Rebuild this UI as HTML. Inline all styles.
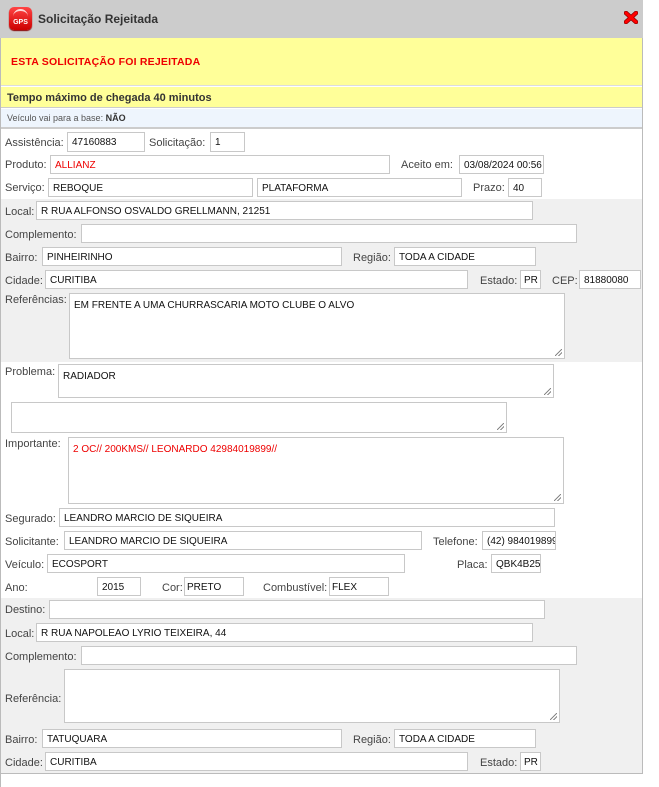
<!DOCTYPE html>
<html><head><meta charset="utf-8"><style>
*{box-sizing:border-box;margin:0;padding:0}
body{width:659px;height:787px;background:#fff;position:relative;overflow:hidden;font-family:"Liberation Sans",Arial,sans-serif}
.a{position:absolute}
.l{position:absolute;font-size:11px;color:#444;line-height:12px;white-space:nowrap}
.i{position:absolute;height:20px;background:#fff;border:1px solid #c8c8c8;font-size:10px;color:#111;padding:3px 0 0 4px;line-height:13px;white-space:nowrap;overflow:hidden}
.t{position:absolute;background:#fff;border:1px solid #c8c8c8;font-size:10px;color:#111;padding:6px 4px;line-height:12px}
.t::after{content:"";position:absolute;right:2px;bottom:2px;width:7px;height:7px;background:linear-gradient(135deg,transparent 45%,#888 46%,#888 54%,transparent 55%,transparent 70%,#888 71%,#888 79%,transparent 80%)}
</style></head><body>
<div class="a" style="left:0;top:0;width:643px;height:774px;border-left:1px solid #bbb;border-right:1px solid #bbb;border-bottom:1px solid #bbb"></div>
<div class="a" style="left:0;top:774px;width:1px;height:13px;background:#bbb"></div>
<div class="a" style="left:0;top:0;width:643px;height:38px;background:#cccccc"></div>
<div class="a" style="left:9px;top:7px;width:23px;height:23px;border-radius:5px;background:linear-gradient(#f44,#c00);box-shadow:0 1px 1px #800"></div>
<div class="a" style="left:9px;top:19px;width:23px;font:bold 7px 'Liberation Sans';color:#fff;text-align:center">GPS</div>
<div class="a" style="left:13px;top:9px;width:15px;height:8px;border-top:2px solid #fff;border-radius:8px 8px 0 0;opacity:.8"></div>
<div class="a" style="left:38px;top:12px;font-weight:bold;font-size:12px;color:#333">Solicitação Rejeitada</div>
<svg class="a" style="left:624px;top:11px" width="14" height="13" viewBox="0 0 14 13"><path d="M2 2L12 11M12 2L2 11" stroke="#8a0000" stroke-width="4.5" stroke-linecap="round"/><path d="M2 2L12 11M12 2L2 11" stroke="#f00" stroke-width="3" stroke-linecap="round"/></svg>
<div class="a" style="left:1px;top:38px;width:641px;height:48px;background:#ffff99;border-bottom:1px solid #ddd"></div>
<div class="a" style="left:11px;top:56px;font-weight:bold;font-size:10.5px;color:#e00;letter-spacing:.2px">ESTA SOLICITAÇÃO FOI REJEITADA</div>
<div class="a" style="left:1px;top:87px;width:641px;height:21px;background:#ffff99;border-bottom:1px solid #ccc"></div>
<div class="a" style="left:7px;top:92px;font-weight:bold;font-size:11px;color:#333">Tempo máximo de chegada 40 minutos</div>
<div class="a" style="left:1px;top:109px;width:641px;height:20px;background:#eef5fd;border-bottom:2px solid #ccc"></div>
<div class="a" style="left:7px;top:113px;font-size:9px;color:#555">Veículo vai para a base: <b style="color:#333">NÃO</b></div>
<div class="a" style="left:1px;top:199px;width:641px;height:163px;background:#f0f0f0"></div>
<div class="a" style="left:1px;top:598px;width:641px;height:175px;background:#f0f0f0"></div>

<div class="l" style="left:5px;top:137px">Assistência:</div><div class="i" style="left:67px;top:132px;width:78px">47160883</div>
<div class="l" style="left:149px;top:137px">Solicitação:</div><div class="i" style="left:210px;top:132px;width:35px">1</div>
<div class="l" style="left:5px;top:159px">Produto:</div><div class="i" style="left:50px;top:155px;width:340px;height:19px;color:#e00">ALLIANZ</div>
<div class="l" style="left:401px;top:159px">Aceito em:</div><div class="i" style="left:459px;top:155px;width:85px;height:19px">03/08/2024 00:56</div>
<div class="l" style="left:5px;top:182px">Serviço:</div><div class="i" style="left:48px;top:178px;width:205px;height:19px">REBOQUE</div>
<div class="i" style="left:257px;top:178px;width:205px;height:19px">PLATAFORMA</div>
<div class="l" style="left:473px;top:182px">Prazo:</div><div class="i" style="left:508px;top:178px;width:34px;height:19px">40</div>

<div class="l" style="left:5px;top:206px">Local:</div><div class="i" style="left:36px;top:201px;width:497px;height:19px">R RUA ALFONSO OSVALDO GRELLMANN, 21251</div>
<div class="l" style="left:5px;top:229px">Complemento:</div><div class="i" style="left:81px;top:224px;width:496px;height:19px"></div>
<div class="l" style="left:5px;top:252px">Bairro:</div><div class="i" style="left:42px;top:247px;width:300px;height:19px">PINHEIRINHO</div>
<div class="l" style="left:353px;top:252px">Região:</div><div class="i" style="left:394px;top:247px;width:142px;height:19px">TODA A CIDADE</div>
<div class="l" style="left:5px;top:275px">Cidade:</div><div class="i" style="left:45px;top:270px;width:423px;height:19px">CURITIBA</div>
<div class="l" style="left:480px;top:275px">Estado:</div><div class="i" style="left:520px;top:270px;width:21px;height:19px;padding-left:3px">PR</div>
<div class="l" style="left:552px;top:275px">CEP:</div><div class="i" style="left:579px;top:270px;width:62px;height:19px">81880080</div>
<div class="l" style="left:5px;top:294px">Referências:</div><div class="t" style="left:69px;top:293px;width:496px;height:66px">EM FRENTE A UMA CHURRASCARIA MOTO CLUBE O ALVO</div>

<div class="l" style="left:5px;top:366px">Problema:</div><div class="t" style="left:58px;top:364px;width:496px;height:34px">RADIADOR</div>
<div class="t" style="left:11px;top:402px;width:496px;height:31px"></div>
<div class="l" style="left:5px;top:438px">Importante:</div><div class="t" style="left:68px;top:437px;width:496px;height:67px;color:#e00">2 OC// 200KMS// LEONARDO 42984019899//</div>
<div class="l" style="left:5px;top:513px">Segurado:</div><div class="i" style="left:59px;top:508px;width:496px;height:19px">LEANDRO MARCIO DE SIQUEIRA</div>
<div class="l" style="left:5px;top:536px">Solicitante:</div><div class="i" style="left:64px;top:531px;width:358px;height:19px">LEANDRO MARCIO DE SIQUEIRA</div>
<div class="l" style="left:433px;top:536px">Telefone:</div><div class="i" style="left:482px;top:531px;width:74px;height:19px">(42) 984019899</div>
<div class="l" style="left:5px;top:559px">Veículo:</div><div class="i" style="left:47px;top:554px;width:358px;height:19px">ECOSPORT</div>
<div class="l" style="left:457px;top:559px">Placa:</div><div class="i" style="left:491px;top:554px;width:50px;height:19px">QBK4B25</div>
<div class="l" style="left:5px;top:582px">Ano:</div><div class="i" style="left:97px;top:577px;width:44px;height:19px">2015</div>
<div class="l" style="left:162px;top:582px">Cor:</div><div class="i" style="left:184px;top:577px;width:60px;height:19px;padding-left:2px">PRETO</div>
<div class="l" style="left:263px;top:582px">Combustível:</div><div class="i" style="left:329px;top:577px;width:60px;height:19px;padding-left:2px">FLEX</div>

<div class="l" style="left:5px;top:604px">Destino:</div><div class="i" style="left:49px;top:600px;width:496px;height:19px"></div>
<div class="l" style="left:5px;top:628px">Local:</div><div class="i" style="left:36px;top:623px;width:497px;height:19px">R RUA NAPOLEAO LYRIO TEIXEIRA, 44</div>
<div class="l" style="left:5px;top:651px">Complemento:</div><div class="i" style="left:81px;top:646px;width:496px;height:19px"></div>
<div class="l" style="left:5px;top:693px">Referência:</div><div class="t" style="left:64px;top:669px;width:496px;height:54px"></div>
<div class="l" style="left:5px;top:734px">Bairro:</div><div class="i" style="left:42px;top:729px;width:300px;height:19px">TATUQUARA</div>
<div class="l" style="left:353px;top:734px">Região:</div><div class="i" style="left:394px;top:729px;width:142px;height:19px">TODA A CIDADE</div>
<div class="l" style="left:5px;top:757px">Cidade:</div><div class="i" style="left:45px;top:752px;width:423px;height:19px">CURITIBA</div>
<div class="l" style="left:480px;top:757px">Estado:</div><div class="i" style="left:520px;top:752px;width:21px;height:19px;padding-left:3px">PR</div>
</body></html>
